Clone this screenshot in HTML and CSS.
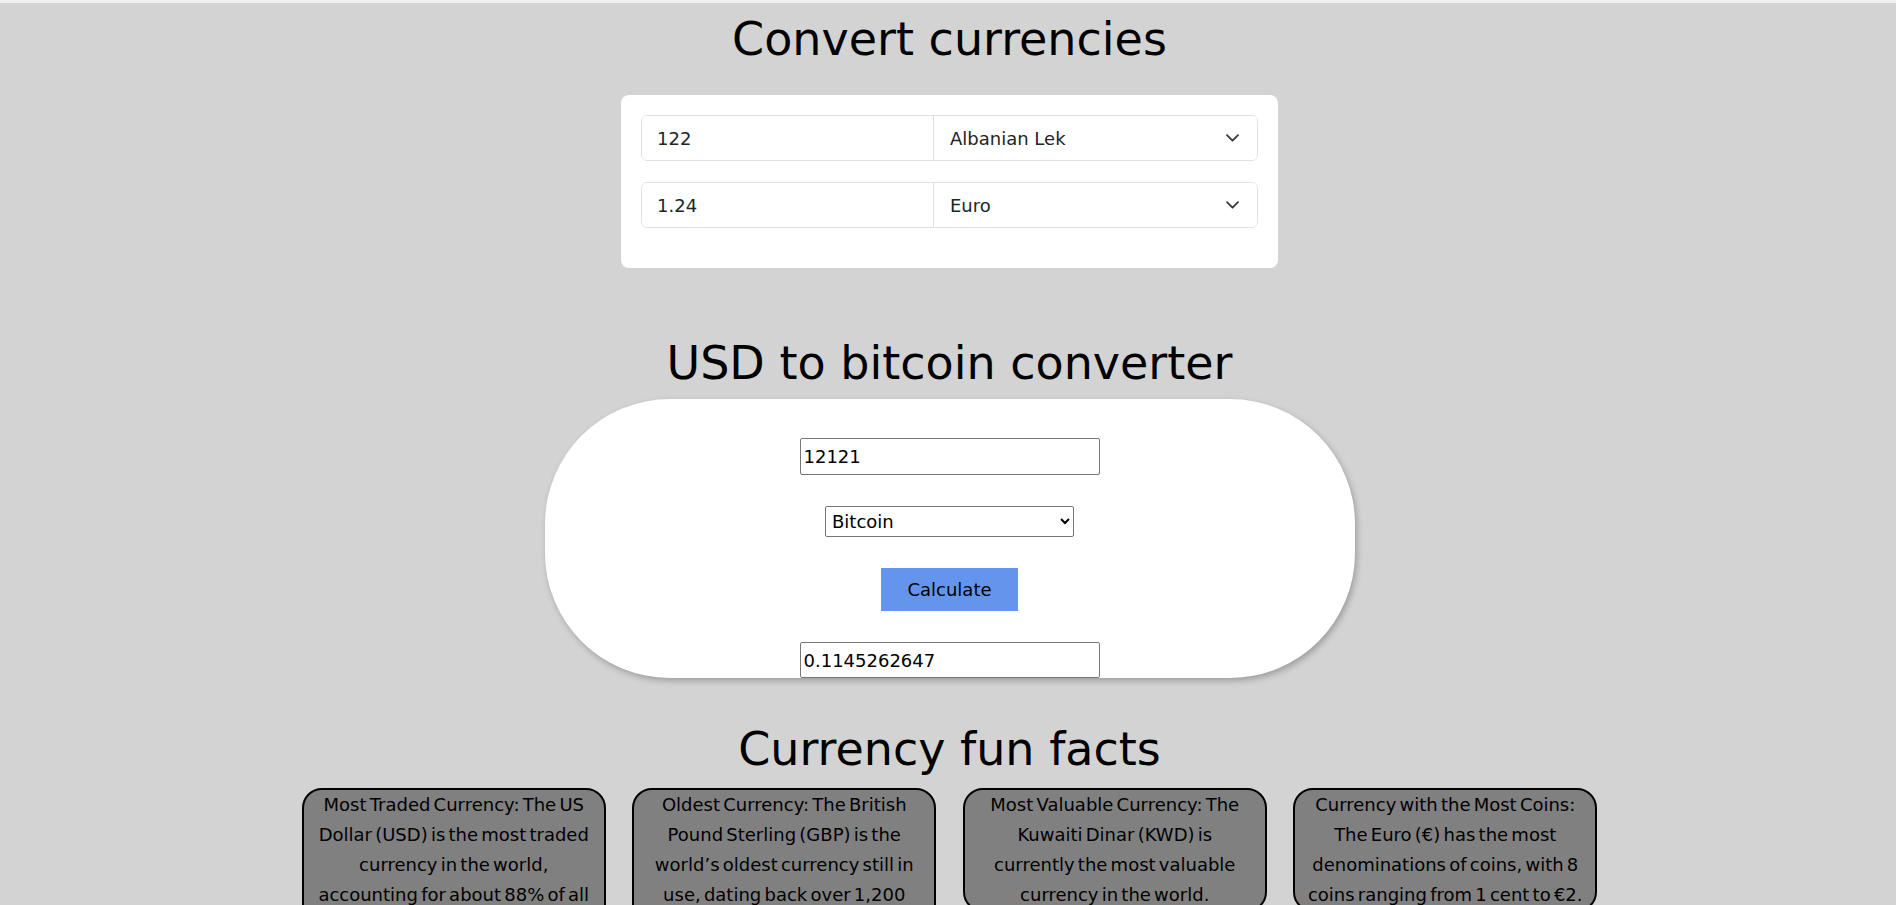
FILE: index.html
```html
<!DOCTYPE html>
<html lang="en">
<head>
<meta charset="utf-8">
<title>Currency converter</title>
<link rel="stylesheet" href="styles.css">
</head>
<body>
<div class="topbar"></div>
<main class="page">
  <h1 class="title title-convert">Convert currencies</h1>
  <section class="converter">
    <div class="input-group">
      <input class="amount" type="text" value="122">
      <div class="select-wrap">
        <select class="currency">
          <option>Albanian Lek</option>
        </select>
        <svg class="chevron" width="13" height="8" viewBox="0 0 13 8"><path d="M1 1.2l5.5 5.5L12 1.2" fill="none" stroke="#343a40" stroke-width="1.8" stroke-linecap="round" stroke-linejoin="round"/></svg>
      </div>
    </div>
    <div class="input-group">
      <input class="amount" type="text" value="1.24">
      <div class="select-wrap">
        <select class="currency">
          <option>Euro</option>
        </select>
        <svg class="chevron" width="13" height="8" viewBox="0 0 13 8"><path d="M1 1.2l5.5 5.5L12 1.2" fill="none" stroke="#343a40" stroke-width="1.8" stroke-linecap="round" stroke-linejoin="round"/></svg>
      </div>
    </div>
  </section>

  <h1 class="title title-btc">USD to bitcoin converter</h1>
  <section class="pill">
    <input class="btc-input" type="text" value="12121">
    <select class="btc-select">
      <option>Bitcoin</option>
    </select>
    <button class="calc" type="button">Calculate</button>
    <input class="btc-input btc-output" type="text" value="0.1145262647">
  </section>

  <h1 class="title title-facts">Currency fun facts</h1>
  <section class="facts">
    <div class="fact">Most Traded Currency: The US Dollar (USD) is the most traded currency in the world, accounting for about 88% of all foreign exchange transactions.</div>
    <div class="fact">Oldest Currency: The British Pound Sterling (GBP) is the world’s oldest currency still in use, dating back over 1,200 years.</div>
    <div class="fact">Most Valuable Currency: The Kuwaiti Dinar (KWD) is currently the most valuable currency in the world.</div>
    <div class="fact">Currency with the Most Coins: The Euro (€) has the most denominations of coins, with 8 coins ranging from 1 cent to €2.</div>
  </section>
</main>
</body>
</html>
```

FILE: styles.css
```css
html, body {
  margin: 0;
  padding: 0;
}

body {
  background: #d3d3d3;
  font-family: "Comic Sans MS", "DejaVu Sans", sans-serif;
  color: #000;
}

.topbar {
  height: 3px;
  background: #f0f0f0;
}

.page {
  display: flex;
  flex-direction: column;
  align-items: center;
  padding-left: 3px;
}

.title {
  font-size: 46px;
  font-weight: normal;
  line-height: 54px;
  margin: 0;
  white-space: nowrap;
}

.title-convert {
  margin: 9px 0 29px;
}

.title-btc {
  margin: 68px 0 9px;
}

.title-facts {
  margin: 44px 0 12px;
}

/* first converter card */
.converter {
  box-sizing: border-box;
  width: 657px;
  background: #fff;
  border-radius: 8px;
  padding: 20px 20px 40px;
  display: flex;
  flex-direction: column;
  gap: 21px;
}

.input-group {
  display: flex;
  height: 46px;
  box-sizing: border-box;
  border: 1px solid #dee2e6;
  border-radius: 6px;
  overflow: hidden;
}

.amount {
  flex: 0 0 292px;
  box-sizing: border-box;
  border: 0;
  border-right: 1px solid #dee2e6;
  padding: 0 15px;
  font: 18px "Comic Sans MS", "DejaVu Sans", sans-serif;
  color: #212529;
  background: #fff;
  outline: none;
}

.select-wrap {
  position: relative;
  flex: 1;
  display: flex;
}

.currency {
  flex: 1;
  appearance: none;
  -webkit-appearance: none;
  border: 0;
  background: #fff;
  padding: 0 40px 0 16px;
  font: 18px "Comic Sans MS", "DejaVu Sans", sans-serif;
  color: #212529;
  outline: none;
}

.chevron {
  position: absolute;
  right: 18px;
  top: 18px;
  pointer-events: none;
}

/* bitcoin pill */
.pill {
  box-sizing: border-box;
  width: 810px;
  height: 279px;
  background: #fff;
  border-radius: 125px;
  box-shadow: 2px 3px 6px rgba(0, 0, 0, 0.25);
  padding-top: 39px;
  display: flex;
  flex-direction: column;
  align-items: center;
  gap: 31px;
}

.btc-input {
  box-sizing: border-box;
  width: 300px;
  height: 37px;
  border: 1px solid #767676;
  border-radius: 2px;
  padding: 0 3px;
  font: 18px "Comic Sans MS", "DejaVu Sans", sans-serif;
  color: #000;
  background: #fff;
  flex-shrink: 0;
}

.btc-output {
  height: 36px;
}

.btc-select {
  box-sizing: border-box;
  width: 249px;
  height: 31px;
  border: 1px solid #767676;
  border-radius: 2px;
  padding: 0 2px;
  font: 18px "Comic Sans MS", "DejaVu Sans", sans-serif;
  color: #000;
  background: #fff;
  flex-shrink: 0;
}

.calc {
  width: 137px;
  height: 43px;
  border: 0;
  background: #6495ed;
  font: 18px "Comic Sans MS", "DejaVu Sans", sans-serif;
  color: #000;
  flex-shrink: 0;
  padding: 0;
}

/* fun facts */
.facts {
  display: flex;
  gap: 26.5px;
  align-items: flex-start;
}

.fact {
  box-sizing: border-box;
  width: 304px;
  background: #808080;
  border: 2px solid #000;
  border-radius: 20px;
  text-align: center;
  font-size: 18px;
  line-height: 30px;
  word-spacing: -2.5px;
  padding: 0 11px;
}
```
